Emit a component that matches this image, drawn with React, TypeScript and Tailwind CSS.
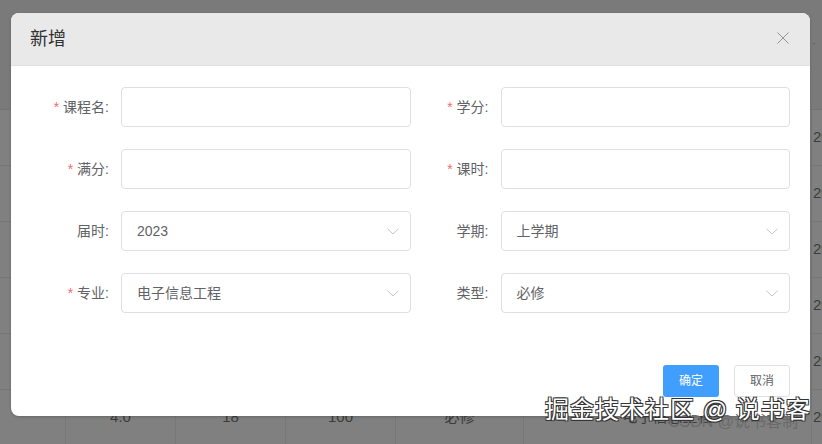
import React from 'react';

const font = { fontFamily: '"Liberation Sans", "Noto Sans CJK SC", sans-serif' };

const rows = ['', '', '', '', '', ''];

const Chevron = () => (
  <svg width="12" height="7" viewBox="0 0 12 7" fill="none" className="text-[#c0c4cc]">
    <path d="M0.5 0.8 L6 6 L11.5 0.8" stroke="currentColor" strokeWidth="1" />
  </svg>
);

const Field: React.FC<{ label: string; required?: boolean; value?: string; select?: boolean }> = ({ label, required, value, select }) => (
  <div className="flex items-center h-10">
    <label className="w-[90px] shrink-0 pr-3 text-right text-[14px] text-[#606266]">
      {required && <span className="text-[#f56c6c] mr-1">*</span>}
      {label}:
    </label>
    <div className="flex-1 h-10 border border-[#dcdfe6] rounded-[4px] bg-white flex items-center pl-[15px] pr-[11px] text-[14px] text-[#606266]">
      <span className="flex-1">{value}</span>
      {select && <Chevron />}
    </div>
  </div>
);

export default function App() {
  return (
    <div className="relative w-[822px] h-[444px] overflow-hidden bg-[#808080]" style={font}>
      {/* table behind the overlay */}
      <div className="flex flex-col">
        <div className="h-[110px] bg-[#7a7a7a] border-b border-[#737373] flex justify-end">
          <div className="w-[10px] pt-[34px] text-[#5a5a5a] text-[12px]">·</div>
        </div>
        {rows.map((_, i) => (
          <div key={i} className="h-[56px] border-b border-[#777] flex text-[15px] text-[#3c3c3c]">
            <div className="w-[66px] shrink-0 border-r border-[#787878]" />
            <div className="w-[110px] shrink-0 border-r border-[#787878] flex items-center justify-center">{i === 5 ? '4.0' : ''}</div>
            <div className="w-[110px] shrink-0 border-r border-[#787878] flex items-center justify-center">{i === 5 ? '18' : ''}</div>
            <div className="w-[110px] shrink-0 border-r border-[#787878] flex items-center justify-center">{i === 5 ? '100' : ''}</div>
            <div className="w-[128px] shrink-0 border-r border-[#787878] flex items-center justify-center">{i === 5 ? '必修' : ''}</div>
            <div className="w-[288px] shrink-0 border-r border-[#787878] flex items-center justify-center">{i === 5 ? '电子信息工程' : ''}</div>
            <div className="w-[60px] shrink-0 flex items-center pl-[1px]">2023</div>
          </div>
        ))}
      </div>

      {/* dialog */}
      <div className="absolute left-[11px] top-[13px] w-[799px] h-[403px] bg-white rounded-[8px] overflow-hidden flex flex-col shadow-[0_1px_3px_rgba(0,0,0,0.2)]">
        <div className="h-[53px] bg-[#e9e9e9] border-b border-[#e2e2e2] flex items-center justify-between pl-[19px] pr-[21px]">
          <span className="text-[18px] text-[#303133]">新增</span>
          <svg width="12" height="12" viewBox="0 0 12 12" className="text-[#909399] mb-[2px]">
            <path d="M0.5 0.5 L11.5 11.5 M11.5 0.5 L0.5 11.5" stroke="currentColor" strokeWidth="1" />
          </svg>
        </div>
        <div className="px-5 pt-[21px] grid grid-cols-2 gap-y-[22px]">
          <Field label="课程名" required />
          <Field label="学分" required />
          <Field label="满分" required />
          <Field label="课时" required />
          <Field label="届时" value="2023" select />
          <Field label="学期" value="上学期" select />
          <Field label="专业" required value="电子信息工程" select />
          <Field label="类型" value="必修" select />
        </div>
        <div className="mt-auto flex justify-end gap-[15px] px-5 pb-[19px]">
          <button className="w-[56px] h-[32px] rounded-[3px] bg-[#409eff] text-white text-[12px]">确定</button>
          <button className="w-[56px] h-[32px] rounded-[3px] bg-white border border-[#dcdfe6] text-[#606266] text-[12px]">取消</button>
        </div>
      </div>

      {/* watermarks */}
      <div className="absolute left-[668px] top-[414px] text-[16px] text-[#6a6a6a] leading-none">CSDN @说书客制</div>
      <div
        className="absolute left-[545px] top-[398px] text-[24px] leading-none text-white tracking-[1px]"
        style={{ textShadow: '1px 1px 0 #333, -1px -1px 0 #333, 1px -1px 0 #333, -1px 1px 0 #333' }}
      >
        掘金技术社区 @ 说书客
      </div>
    </div>
  );
}
